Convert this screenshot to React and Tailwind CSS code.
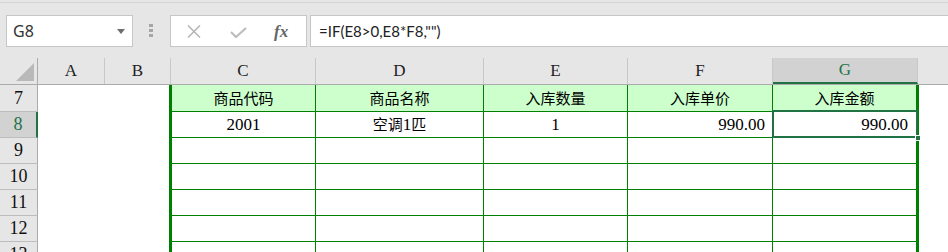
import React from 'react';

const SERIF = { fontFamily: '"Liberation Serif", "Noto Sans CJK SC", serif' };
const CJK = { fontFamily: '"Noto Sans CJK SC", "Liberation Sans", sans-serif' };

function Cjk({ children }) {
    return <span className="text-[15px]" style={CJK}>{children}</span>;
}

function Toolbar() {
    return (
        <div className="h-[58px] bg-[#e6e6e6] pt-[2px]">
            <div className="border-t border-[#d4d4d4] flex items-start pt-[12px]">
                {/* Name box */}
                <div className="ml-[6px] w-[127px] h-[32px] border border-[#c6c6c6] bg-white flex items-center pl-[6px] pr-[7px]">
                    <span className="text-[16px] text-[#333] flex-1" style={{ fontFamily: '"Noto Sans", sans-serif' }}>G8</span>
                    <svg width="8" height="5" viewBox="0 0 8 5"><path d="M0 0h8L4 5z" fill="#6d6d6d" /></svg>
                </div>
                {/* grip */}
                <div className="ml-[16px] mt-[9px] flex flex-col gap-[2px]">
                    <div className="w-[4px] h-[3px] bg-[#a6a6a6]" />
                    <div className="w-[4px] h-[3px] bg-[#a6a6a6]" />
                    <div className="w-[4px] h-[3px] bg-[#a6a6a6]" />
                </div>
                {/* cancel / enter / fx */}
                <div className="ml-[17px] w-[137px] h-[32px] border border-[#c6c6c6] bg-white flex items-center pl-[16px]">
                    <svg width="14" height="13" viewBox="0 0 14 13">
                        <path d="M1 0.5L13 12.5M13 0.5L1 12.5" stroke="#b4b4b4" strokeWidth="1.5" fill="none" />
                    </svg>
                    <svg className="ml-[29px] mt-[2px]" width="17" height="11" viewBox="0 0 17 11">
                        <path d="M1 5L6 10L16 1" stroke="#bdbdbd" strokeWidth="2.2" fill="none" />
                    </svg>
                    <span className="ml-[27px] text-[17px] italic font-bold text-[#666] leading-none" style={SERIF}>fx</span>
                </div>
                {/* formula */}
                <div className="ml-[3px] flex-1 h-[32px] border border-[#c6c6c6] border-r-0 bg-white flex items-center pl-[8px]">
                    <span className="text-[15px] text-[#222]" style={{ fontFamily: 'Lato, "Liberation Sans", sans-serif' }}>=IF(E8&gt;0,E8*F8,"")</span>
                </div>
            </div>
        </div>
    );
}

const COLS = [
    { key: 'A', w: 'w-[67px]' },
    { key: 'B', w: 'w-[66px]' },
    { key: 'C', w: 'w-[145px]' },
    { key: 'D', w: 'w-[168px]' },
    { key: 'E', w: 'w-[144px]' },
    { key: 'F', w: 'w-[145px]' },
    { key: 'G', w: 'w-[145px]' },
];

function HeaderRow() {
    return (
        <div className="flex h-[27px] bg-[#e6e6e6] border-b border-[#ababab]" style={SERIF}>
            <div className="w-[38px] border-r border-[#ababab] flex items-end justify-end pr-[3px] pb-[3px]">
                <svg width="18" height="18" viewBox="0 0 18 18"><path d="M18 0V18H0z" fill="#b9b9b9" /></svg>
            </div>
            {COLS.map((c) => {
                const sel = c.key === 'G';
                return (
                    <div
                        key={c.key}
                        className={`${c.w} border-r border-[#c8c8c8] flex items-center justify-center text-[17px] ${sel ? 'bg-[#d2d2d2] text-[#217346] border-b-2 border-b-[#217346]' : 'text-[#222]'}`}
                    >
                        {c.key}
                    </div>
                );
            })}
            <div className="flex-1" />
        </div>
    );
}

function RowHead({ n, sel }) {
    return (
        <div
            className={`w-[38px] shrink-0 border-b border-[#bdbdbd] flex items-center justify-center text-[18px] ${sel ? 'bg-[#d2d2d2] text-[#217346] border-r-2 border-r-[#217346]' : 'bg-[#e6e6e6] text-[#111] border-r border-r-[#ababab]'}`}
            style={SERIF}
        >
            {n}
        </div>
    );
}

function Row({ n, h, head, cells, sel }) {
    const fill = head ? 'bg-[#ccffcc]' : 'bg-white';
    const c = cells || ['', '', '', '', ''];
    return (
        <div className={`flex ${h}`} style={SERIF}>
            <RowHead n={n} sel={sel} />
            <div className="w-[131px] shrink-0 bg-white" />
            <div className={`w-[147px] shrink-0 border-l-[3px] border-r border-b border-[#008000] ${fill} flex items-center justify-center text-[17px]`}>{c[0]}</div>
            <div className={`w-[168px] shrink-0 border-r border-b border-[#008000] ${fill} flex items-center justify-center text-[17px]`}>{c[1]}</div>
            <div className={`w-[144px] shrink-0 border-r border-b border-[#008000] ${fill} flex items-center justify-center text-[17px]`}>{c[2]}</div>
            <div className={`w-[145px] shrink-0 border-r border-b border-[#008000] ${fill} flex items-center ${head ? 'justify-center' : 'justify-end pr-[7px]'} text-[17px]`}>{c[3]}</div>
            <div className={`relative w-[146px] shrink-0 border-r-[3px] border-b border-[#008000] ${fill} flex items-center ${head ? 'justify-center' : 'justify-end pr-[8px]'} text-[17px]`}>
                {c[4]}
                {sel && (
                    <>
                        <div className="absolute left-[-1px] top-[-2px] right-[-2px] bottom-[-1px] border-2 border-[#217346] z-10" />
                        <div className="absolute right-[-5px] bottom-[-4px] w-[6px] h-[6px] bg-[#217346] border border-white z-20" />
                    </>
                )}
            </div>
            <div className="flex-1 bg-white" />
        </div>
    );
}

export default function App() {
    return (
        <div className="w-[948px] h-[252px] overflow-hidden bg-white text-black">
            <Toolbar />
            <HeaderRow />
            <Row
                n={7}
                h="h-[27px]"
                head
                cells={[<Cjk>商品代码</Cjk>, <Cjk>商品名称</Cjk>, <Cjk>入库数量</Cjk>, <Cjk>入库单价</Cjk>, <Cjk>入库金额</Cjk>]}
            />
            <Row
                n={8}
                h="h-[26px]"
                sel
                cells={['2001', <span><Cjk>空调</Cjk>1<Cjk>匹</Cjk></span>, '1', '990.00', '990.00']}
            />
            <Row n={9} h="h-[26px]" />
            <Row n={10} h="h-[26px]" />
            <Row n={11} h="h-[26px]" />
            <Row n={12} h="h-[26px]" />
            <Row n={13} h="h-[26px]" />
        </div>
    );
}
